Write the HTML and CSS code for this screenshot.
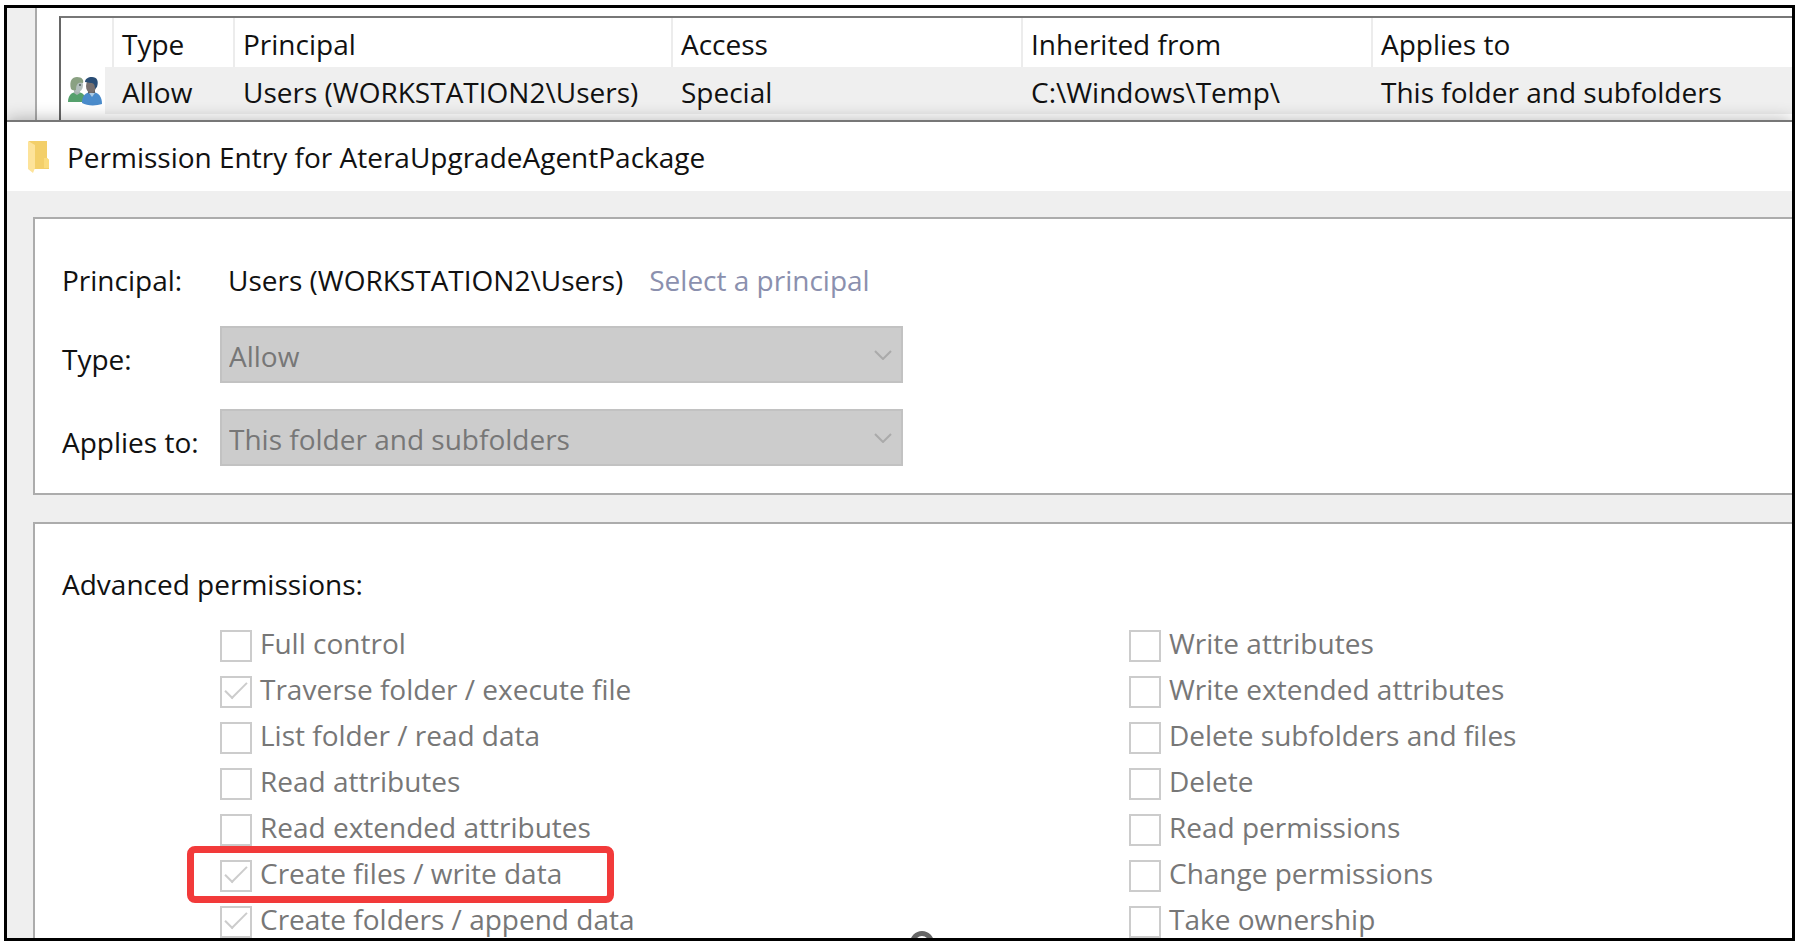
FILE: index.html
```
<!DOCTYPE html>
<html lang="en">

<head>
    <meta charset="UTF-8">
    <meta name="viewport" content="width=device-width, initial-scale=1.0">
    <title>Permission Entry for AteraUpgradeAgentPackage</title>
    <link rel="stylesheet" href="styles.css">
</head>

<body>
    <div class="frame">
        <!-- Advanced security window behind the dialog -->
        <div class="back-window">
            <div class="back-page">
                <div class="entries-box">
                    <table class="entries">
                        <thead>
                            <tr>
                                <th class="col-icon"></th>
                                <th class="col-type">Type</th>
                                <th class="col-principal">Principal</th>
                                <th class="col-access">Access</th>
                                <th class="col-inherited">Inherited from</th>
                                <th>Applies to</th>
                            </tr>
                        </thead>
                        <tbody>
                            <tr>
                                <td class="icon-cell">
                                    <svg class="users-icon" width="34" height="30" viewBox="0 0 34 30">
                                        <path d="M0 26c0-6 3-10 9-10s9 4 9 10z" fill="#55a06c" />
                                        <path d="M6 12h6v5l-3 2-3-2z" fill="#a9b5b3" />
                                        <ellipse cx="10" cy="9" rx="5" ry="7" fill="#b3bfbd" />
                                        <path d="M3 13C1 5 4 1 9 1s7 3 6 6c-4-1-7 0-7 7-2 1-4 0-5-1z" fill="#8aa182" />
                                        <circle cx="12" cy="9" r="1" fill="#4d5a5c" />
                                        <path d="M14 27c0-7 3-11 10-11s10 5 10 12c-6 2-15 2-20-1z" fill="#4a8bcb" />
                                        <path d="M20 13h7v4l-3 3-4-3z" fill="#5f5d60" />
                                        <ellipse cx="23" cy="10" rx="5" ry="7" fill="#77706f" />
                                        <path d="M17 6c0-3 3-5 7-5 5 0 7 4 5 10l-2 2c0-4-1-6-4-6z" fill="#294d75" />
                                        <path d="M21 17l3 4 3-4" fill="#a9cbe8" />
                                    </svg>
                                </td>
                                <td>Allow</td>
                                <td>Users (WORKSTATION2\Users)</td>
                                <td>Special</td>
                                <td>C:\Windows\Temp\</td>
                                <td>This folder and subfolders</td>
                            </tr>
                        </tbody>
                    </table>
                </div>
            </div>
        </div>

        <!-- Permission entry dialog -->
        <div class="dialog">
            <div class="title-bar">
                <svg class="folder-icon" width="24" height="34" viewBox="0 0 24 34">
                    <path d="M2 1h18v17l2 2v9H7z" fill="#f3cf69" />
                    <path d="M17 18h3l2 2v8h-5z" fill="#fadb7c" />
                    <path d="M1 1l7 4v23l-2 5-5-4z" fill="#fde39a" />
                </svg>
                <h1>Permission Entry for AteraUpgradeAgentPackage</h1>
            </div>

            <div class="dialog-body">
                <div class="group">
                    <div class="field principal">
                        <span class="field-label">Principal:</span>
                        <span class="principal-name">Users (WORKSTATION2\Users)</span>
                        <a class="select-link" href="#">Select a principal</a>
                    </div>
                    <div class="field">
                        <label class="field-label" for="type">Type:</label>
                        <div class="dropdown">
                            <select id="type" disabled>
                                <option>Allow</option>
                            </select>
                            <svg class="arrow" width="18" height="10" viewBox="0 0 18 10">
                                <path d="M1 1l8 8 8-8" />
                            </svg>
                        </div>
                    </div>
                    <div class="field">
                        <label class="field-label" for="applies">Applies to:</label>
                        <div class="dropdown">
                            <select id="applies" disabled>
                                <option>This folder and subfolders</option>
                            </select>
                            <svg class="arrow" width="18" height="10" viewBox="0 0 18 10">
                                <path d="M1 1l8 8 8-8" />
                            </svg>
                        </div>
                    </div>
                </div>

                <div class="group permissions">
                    <h2>Advanced permissions:</h2>
                    <div class="columns">
                        <div class="column">
                            <label class="check"><input type="checkbox" disabled><span>Full control</span></label>
                            <label class="check"><input type="checkbox" checked disabled><span>Traverse folder / execute file</span></label>
                            <label class="check"><input type="checkbox" disabled><span>List folder / read data</span></label>
                            <label class="check"><input type="checkbox" disabled><span>Read attributes</span></label>
                            <label class="check"><input type="checkbox" disabled><span>Read extended attributes</span></label>
                            <label class="check highlighted"><input type="checkbox" checked disabled><span>Create files / write data</span></label>
                            <label class="check"><input type="checkbox" checked disabled><span>Create folders / append data</span></label>
                        </div>
                        <div class="column">
                            <label class="check"><input type="checkbox" disabled><span>Write attributes</span></label>
                            <label class="check"><input type="checkbox" disabled><span>Write extended attributes</span></label>
                            <label class="check"><input type="checkbox" disabled><span>Delete subfolders and files</span></label>
                            <label class="check"><input type="checkbox" disabled><span>Delete</span></label>
                            <label class="check"><input type="checkbox" disabled><span>Read permissions</span></label>
                            <label class="check"><input type="checkbox" disabled><span>Change permissions</span></label>
                            <label class="check"><input type="checkbox" disabled><span>Take ownership</span></label>
                        </div>
                    </div>
                </div>
            </div>
        </div>

        <div class="ring"></div>
    </div>
</body>

</html>
```
FILE: styles.css
```
* {
    margin: 0;
    padding: 0;
    box-sizing: border-box;
}

body {
    height: 100vh;
    padding: 5px 5px 3px 4px;
    overflow: hidden;
    background: #fff;
    color: #111;
    font-family: 'Open Sans', 'Noto Sans', sans-serif;
    font-size: 28px;
    line-height: 40px;
}

.frame {
    position: relative;
    height: 100%;
    border: 3px solid #000;
    overflow: hidden;
    background: #efefef;
}

/* Window behind the dialog */
.back-window {
    padding-left: 28px;
}

.back-page {
    padding: 8px 0 0 22px;
    border-left: 2px solid #aaa;
    background: #fff;
}

.entries-box {
    padding-bottom: 6px;
    border-top: 2px solid #777;
    border-left: 2px solid #666;
}

.entries {
    width: 100%;
    table-layout: fixed;
    border-collapse: separate;
    border-spacing: 0;
}

.entries th,
.entries td {
    height: 47px;
    padding: 2px 0 0 8px;
    text-align: left;
    font-weight: normal;
    white-space: nowrap;
}

.entries th {
    height: 49px;
    border-right: 2px solid #ececec;
}

.entries th:last-child {
    border-right: none;
}

.entries td {
    background: #efefef;
}

.entries .icon-cell {
    padding: 0 0 0 7px;
    background: linear-gradient(to right, #fff 44px, #efefef 44px);
}

.col-icon {
    width: 53px;
}

.col-type {
    width: 121px;
}

.col-principal {
    width: 438px;
}

.col-access {
    width: 350px;
}

.col-inherited {
    width: 350px;
}

.users-icon {
    display: block;
}

/* Dialog */
.dialog {
    position: relative;
    border-top: 2px solid #777;
    background: #efefef;
    box-shadow: 0 0 16px rgba(0, 0, 0, 0.3);
}

.title-bar {
    display: flex;
    align-items: center;
    gap: 16px;
    height: 69px;
    padding-left: 20px;
    background: #fff;
}

.title-bar h1,
.permissions h2 {
    font-size: 28px;
    font-weight: normal;
}

.dialog-body {
    display: flex;
    flex-direction: column;
    gap: 27px;
    padding: 26px 0 0 26px;
}

.group {
    display: flex;
    flex-direction: column;
    gap: 26px;
    padding: 40px 0 27px 27px;
    border: 2px solid #acacac;
    border-right: none;
    background: #fff;
}

.field {
    display: flex;
    align-items: center;
}

.field-label {
    width: 158px;
    padding-top: 8px;
}

.principal {
    height: 41px;
}

.principal .field-label {
    width: 166px;
    padding-top: 0;
}

.select-link {
    margin-left: 26px;
    color: #8b90ae;
    text-decoration: none;
}

.dropdown {
    position: relative;
    width: 683px;
}

.dropdown select {
    display: block;
    width: 100%;
    height: 57px;
    padding: 2px 7px 0;
    appearance: none;
    border: 2px solid #c2c2c2;
    border-radius: 0;
    background: #ccc;
    color: #777;
    font: inherit;
    opacity: 1;
}

.arrow {
    position: absolute;
    top: 24px;
    right: 11px;
    fill: none;
    stroke: #aaa;
    stroke-width: 2;
}

/* Permission list */
.permissions {
    gap: 19px;
    padding-bottom: 0;
}

.columns {
    display: grid;
    grid-template-columns: 909px 1fr;
    padding-left: 158px;
}

.column {
    display: flex;
    flex-direction: column;
    align-items: flex-start;
}

.check {
    position: relative;
    display: flex;
    gap: 8px;
    height: 46px;
    color: #777;
    white-space: nowrap;
}

.check input {
    width: 32px;
    height: 32px;
    margin-top: 7px;
    appearance: none;
    border: 2px solid #ccc;
    background: #fff;
}

/* Tick mark */
.check input:checked::after {
    content: '';
    display: block;
    width: 20px;
    height: 9px;
    margin: 4px 0 0 3px;
    border-left: 2px solid #ccc;
    border-bottom: 2px solid #ccc;
    transform: rotate(-45deg);
}

/* Red marker drawn over the row */
.highlighted::after {
    content: '';
    position: absolute;
    top: -7px;
    left: -33px;
    right: -52px;
    height: 43px;
    border: 7px solid #f23a3a;
    border-radius: 8px;
}

.ring {
    position: absolute;
    left: 903px;
    bottom: -17px;
    width: 24px;
    height: 24px;
    border: 5px solid #666;
    border-radius: 50%;
}
```
